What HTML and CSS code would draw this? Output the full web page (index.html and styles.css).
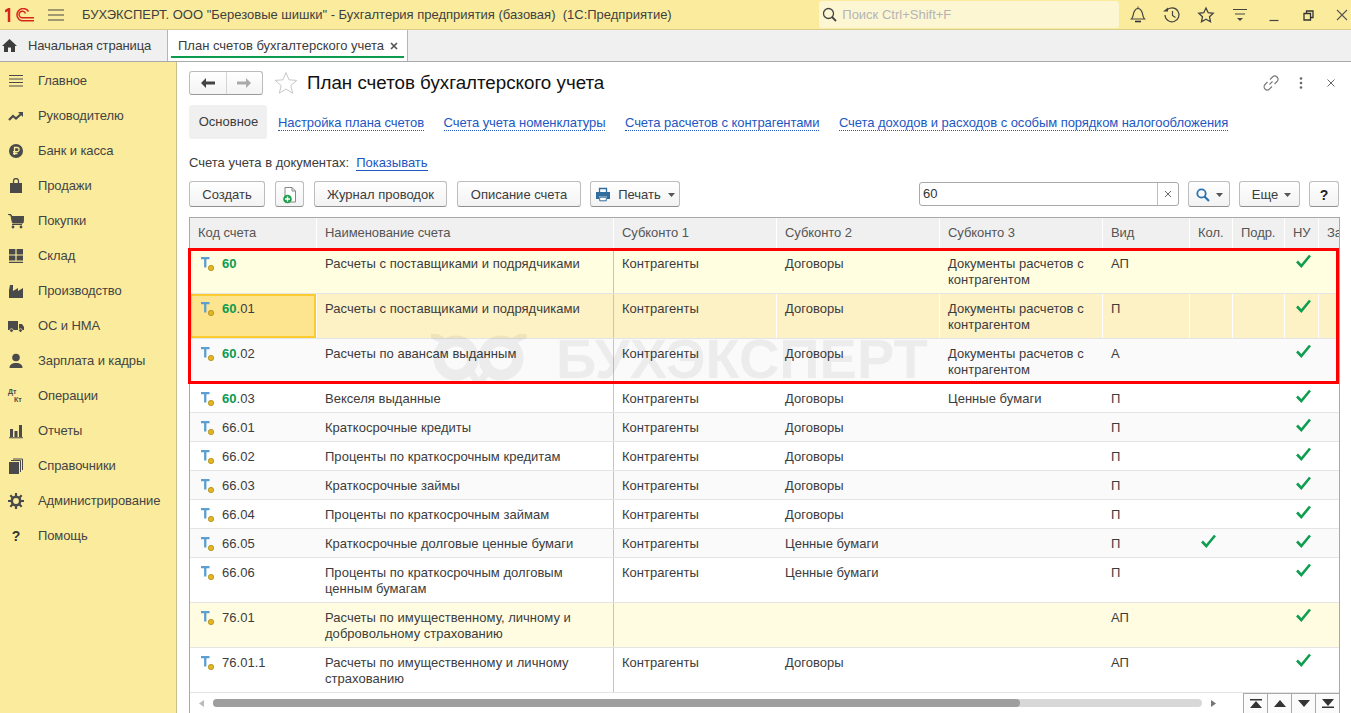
FILE: index.html
```html
<!DOCTYPE html>
<html lang="ru">
<head>
<meta charset="utf-8">
<title>План счетов бухгалтерского учета</title>
<link rel="stylesheet" href="styles.css">
</head>
<body>
<svg class="defs" width="0" height="0" aria-hidden="true">
  <symbol id="acct" viewBox="0 0 16 16"><path d="M1 1h8.500v2.300H6.400V11.500H4.100V3.300H1z" fill="#5b9fd0"/><circle cx="11" cy="12" r="2.700" fill="#e2b521" stroke="#a98a1c" stroke-width=".7"/></symbol>
  <symbol id="check" viewBox="0 0 16 14"><path d="M1 7.500l4.300 4.500L14 1.500" fill="none" stroke="#0f9d50" stroke-width="2.600"/></symbol>
  <symbol id="caret" viewBox="0 0 7 4"><path d="M0 0h7L3.500 4z" fill="#555"/></symbol>
</svg>
<div class="app">
  <header class="topbar">
    <svg class="logo" width="29" height="14" viewBox="0 0 29 14"><path d="M0 3.500L4 1v13" fill="none" stroke="#d9261c" stroke-width="2.500"/><path d="M23.500 3.500A6.200 6.200 0 1 0 16.500 12.700H29M20.500 5.500A3.300 3.300 0 1 0 16.500 9.700H29" fill="none" stroke="#d9261c" stroke-width="1.500"/></svg>
    <svg class="burger" width="16" height="12" viewBox="0 0 16 12"><path d="M0 1h16M0 6h16M0 11h16" stroke="#444" stroke-width="1.200"/></svg>
    <div class="apptitle">БУХЭКСПЕРТ. ООО "Березовые шишки" - Бухгалтерия предприятия (базовая)&nbsp; (1С:Предприятие)</div>
    <div class="globalsearch">
      <svg width="15" height="15" viewBox="0 0 15 15"><circle cx="6.500" cy="6.500" r="5" fill="none" stroke="#444" stroke-width="1.300"/><path d="M10 10l4 4" stroke="#444" stroke-width="1.800"/></svg>
      <span>Поиск Ctrl+Shift+F</span>
    </div>
    <div class="topicons">
      <svg width="18" height="18" viewBox="0 0 18 18"><path d="M2.500 13c2-2 1.500-4.500 2.500-7C6 3.500 7.800 2.500 9 2.500s3 1 4 3.500c1 2.500.5 5 2.500 7z" fill="none" stroke="#444" stroke-width="1.200"/><path d="M6 15.500h6" stroke="#333" stroke-width="1.600"/><path d="M9 .5v2" stroke="#444"/></svg>
      <svg width="18" height="18" viewBox="0 0 18 18"><path d="M3.500 4.500A7 7 0 1 1 2 9" fill="none" stroke="#444" stroke-width="1.200"/><path d="M0 5.500h5V1.500z" fill="#444"/><path d="M9.500 5v4.500l3 2" fill="none" stroke="#444" stroke-width="1.200"/></svg>
      <svg width="18" height="18" viewBox="0 0 18 18"><path d="M9 2l2.200 4.700 5 .6-3.700 3.400 1 5L9 13.300l-4.500 2.400 1-5L1.800 7.300l5-.6z" fill="none" stroke="#444" stroke-width="1.300"/></svg>
      <svg width="18" height="18" viewBox="0 0 18 18"><path d="M2 3.500h14M4 8h10" stroke="#444" stroke-width="1.200"/><path d="M6 12h6l-3 3z" fill="#444"/></svg>
      <svg width="18" height="18" viewBox="0 0 18 18"><path d="M4.500 14.500h9" stroke="#444" stroke-width="1.200"/></svg>
      <svg width="18" height="18" viewBox="0 0 18 18"><path d="M5 7.500h6.500V14H5zM7.500 7.500V5H14v6.500h-2.500" fill="none" stroke="#333" stroke-width="1.300"/></svg>
      <svg width="18" height="18" viewBox="0 0 18 18"><path d="M4 4l10 10M14 4L4 14" stroke="#555" stroke-width="1.100"/></svg>
    </div>
  </header>

  <nav class="tabbar">
    <div class="tab tab-home">
      <svg width="15" height="13" viewBox="0 0 15 13"><path d="M7.500 0L15 7h-2v6H9V8.500H6V13H2V7H0z" fill="#3d3d3d"/></svg>
      <span>Начальная страница</span>
    </div>
    <div class="tab tab-active">
      <span>План счетов бухгалтерского учета</span>
      <svg width="8" height="8" viewBox="0 0 8 8"><path d="M1 1l6 6M7 1L1 7" stroke="#555" stroke-width="1.700"/></svg>
    </div>
  </nav>

  <div class="main">
    <aside class="sidebar">
      <div class="sideitem"><svg width="16" height="16" viewBox="0 0 16 16"><path d="M1 2.500h14M1 6h14M1 9.500h14M1 13h14" stroke="#4a4a4a"/></svg><span>Главное</span></div>
      <div class="sideitem"><svg width="16" height="16" viewBox="0 0 16 16"><path d="M1 12l4-4 3 2.500L13 6" fill="none" stroke="#4a4a4a" stroke-width="2.200"/><path d="M10 4h5v5z" fill="#4a4a4a"/></svg><span>Руководителю</span></div>
      <div class="sideitem"><svg width="16" height="16" viewBox="0 0 16 16"><circle cx="8" cy="8" r="7" fill="#4a4a4a"/><path d="M6.500 12V4.500H9a2 2 0 0 1 0 4.200H5M5 10.500h4.500" fill="none" stroke="#fbec9d" stroke-width="1.300"/></svg><span>Банк и касса</span></div>
      <div class="sideitem"><svg width="16" height="16" viewBox="0 0 16 16"><path d="M2 5h12v10H2z" fill="#4a4a4a"/><path d="M5.500 7V3a2.500 2.500 0 0 1 5 0v4" fill="none" stroke="#4a4a4a" stroke-width="1.300"/></svg><span>Продажи</span></div>
      <div class="sideitem"><svg width="16" height="16" viewBox="0 0 16 16"><path d="M0 1.500h3l1 2h12l-1 6.500H4.500L3 3" fill="#4a4a4a" stroke="#4a4a4a"/><path d="M4 11.500h10" stroke="#4a4a4a"/><circle cx="5" cy="14" r="1.400" fill="#4a4a4a"/><circle cx="13" cy="14" r="1.400" fill="#4a4a4a"/></svg><span>Покупки</span></div>
      <div class="sideitem"><svg width="16" height="16" viewBox="0 0 16 16"><path d="M1 1h6.400v5.500H1zM8.600 1H15v5.500H8.600zM1 7.600h6.400v4.900H1zM8.600 7.600H15v4.900H8.600zM1 13.800h14V15H1z" fill="#4a4a4a"/></svg><span>Склад</span></div>
      <div class="sideitem"><svg width="16" height="16" viewBox="0 0 16 16"><path d="M1 15V7l1-5h3v6l5-3v3l5-3v10z" fill="#4a4a4a"/></svg><span>Производство</span></div>
      <div class="sideitem"><svg width="16" height="16" viewBox="0 0 16 16"><path d="M0 3h10v9H0zM11 6h3l2 3v3h-5z" fill="#4a4a4a"/><circle cx="3.500" cy="12.500" r="1.800" fill="#4a4a4a" stroke="#fbec9d" stroke-width=".7"/><circle cx="12.500" cy="12.500" r="1.800" fill="#4a4a4a" stroke="#fbec9d" stroke-width=".7"/></svg><span>ОС и НМА</span></div>
      <div class="sideitem"><svg width="16" height="16" viewBox="0 0 16 16"><circle cx="8" cy="4.500" r="3.800" fill="#4a4a4a"/><path d="M1.500 15c0-3.500 2.500-5 6.500-5s6.500 1.500 6.500 5z" fill="#4a4a4a"/></svg><span>Зарплата и кадры</span></div>
      <div class="sideitem"><span class="dtkt"><b>Дт</b><b>Кт</b></span><span>Операции</span></div>
      <div class="sideitem"><svg width="16" height="16" viewBox="0 0 16 16"><path d="M2 6h3v8H2zM6.500 8h3v6h-3zM11 2h3v12h-3zM1 14.300h14v1H1z" fill="#4a4a4a"/></svg><span>Отчеты</span></div>
      <div class="sideitem"><svg width="16" height="16" viewBox="0 0 16 16"><path d="M1 4h10v12H1z" fill="#4a4a4a"/><path d="M3 2.500h9.500V14M5 1h9.500v11" fill="none" stroke="#4a4a4a"/></svg><span>Справочники</span></div>
      <div class="sideitem"><svg width="16" height="16" viewBox="0 0 16 16"><circle cx="8" cy="8" r="4.200" fill="none" stroke="#4a4a4a" stroke-width="2.600"/><path d="M8 0v3M8 13v3M0 8h3M13 8h3M2.300 2.300l2.200 2.200M11.500 11.500l2.200 2.200M13.700 2.300l-2.200 2.200M4.500 11.500l-2.200 2.200" stroke="#4a4a4a" stroke-width="2.200"/></svg><span>Администрирование</span></div>
      <div class="sideitem"><span class="helpmark">?</span><span>Помощь</span></div>
    </aside>

    <section class="content">
      <div class="formhead">
        <div class="navbtns">
          <button class="navbtn"><svg width="14" height="10" viewBox="0 0 14 10"><path d="M5 0v3.500h9v3H5V10L0 5z" fill="#444"/></svg></button>
          <button class="navbtn"><svg width="14" height="10" viewBox="0 0 14 10"><path d="M9 0v3.500H0v3h9V10l5-5z" fill="#aaa"/></svg></button>
        </div>
        <svg class="favstar" width="24" height="24" viewBox="0 0 24 24"><path d="M12 1.500l3 7.300 7.800.6-6 5.100 1.900 7.700L12 18l-6.700 4.200 1.900-7.700-6-5.100 7.800-.6z" fill="none" stroke="#c8c8c8"/></svg>
        <h1>План счетов бухгалтерского учета</h1>
        <div class="headicons">
          <svg width="16" height="16" viewBox="0 0 16 16"><path d="M6.500 9.500l3-3M7 4.500L9.500 2a3 3 0 0 1 4.500 4.500L11.500 9M9 11.500L6.500 14A3 3 0 0 1 2 9.500L4.500 7" fill="none" stroke="#777" stroke-width="1.100"/></svg>
          <svg width="16" height="16" viewBox="0 0 16 16"><circle cx="8" cy="3.500" r="1.300" fill="#666"/><circle cx="8" cy="8" r="1.300" fill="#666"/><circle cx="8" cy="12.500" r="1.300" fill="#666"/></svg>
          <svg width="16" height="16" viewBox="0 0 16 16"><path d="M4.500 4.500l7 7M11.500 4.500l-7 7" stroke="#666"/></svg>
        </div>
      </div>

      <div class="pagelinks">
        <span class="pagetab">Основное</span>
        <a class="pagelink">Настройка плана счетов</a>
        <a class="pagelink">Счета учета номенклатуры</a>
        <a class="pagelink">Счета расчетов с контрагентами</a>
        <a class="pagelink">Счета доходов и расходов с особым порядком налогообложения</a>
      </div>

      <div class="infoline"><span>Счета учета в документах:</span><a class="solidlink">Показывать</a></div>

      <div class="toolbar">
        <button class="btn w-create">Создать</button>
        <button class="btn w-icon"><svg width="18" height="18" viewBox="0 0 18 18"><path d="M4 1.500h7l3.500 3.500v11H4z" fill="#fff" stroke="#888"/><path d="M11 1.500V5h3.500" fill="none" stroke="#888"/><circle cx="6.500" cy="13" r="4.300" fill="#1f9e4b"/><path d="M4 13h5M6.500 10.500v5" stroke="#fff" stroke-width="1.400"/></svg></button>
        <button class="btn w-journal">Журнал проводок</button>
        <button class="btn w-desc">Описание счета</button>
        <button class="btn w-print"><svg width="16" height="15" viewBox="0 0 16 15"><path d="M4.500 5V1.500h7V5" fill="none" stroke="#2f6d9e" stroke-width="1.300"/><path d="M1 5h14v7h-3V9.500H4V12H1z" fill="#2f6d9e"/><path d="M4.700 10.200h6.600v3.600H4.700z" fill="#fff" stroke="#2f6d9e"/></svg><span>Печать</span><svg class="caret" width="7" height="4"><use href="#caret"/></svg></button>
        <div class="searchfield"><span class="searchvalue">60</span><span class="searchclear"><svg width="8" height="8" viewBox="0 0 8 8"><path d="M1 1l6 6M7 1L1 7" stroke="#666"/></svg></span></div>
        <button class="btn w-find"><svg width="14" height="14" viewBox="0 0 14 14"><circle cx="5.500" cy="5.500" r="4.200" fill="none" stroke="#2b74b0" stroke-width="1.800"/><path d="M8.500 8.500L13 13" stroke="#2b74b0" stroke-width="2.200"/></svg><svg class="caret" width="7" height="4"><use href="#caret"/></svg></button>
        <button class="btn w-more"><span>Еще</span><svg class="caret" width="7" height="4"><use href="#caret"/></svg></button>
        <button class="btn w-help"><b>?</b></button>
      </div>

      <div class="grid">
        <div class="gridrow gridhead">
          <div>Код счета</div><div>Наименование счета</div><div>Субконто 1</div><div>Субконто 2</div><div>Субконто 3</div><div>Вид</div><div>Кол.</div><div>Подр.</div><div>НУ</div><div>За</div>
        </div>

        <div class="gridrow tall r-yellow">
          <div class="code"><svg class="acct"><use href="#acct"/></svg><span><b>60</b></span></div><div>Расчеты с поставщиками и подрядчиками</div><div>Контрагенты</div><div>Договоры</div><div>Документы расчетов с контрагентом</div><div>АП</div><div></div><div></div><div class="mark"><svg class="check"><use href="#check"/></svg></div><div></div>
        </div>
        <div class="gridrow tall r-selected">
          <div class="code current"><svg class="acct"><use href="#acct"/></svg><span><b>60</b>.01</span></div><div>Расчеты с поставщиками и подрядчиками</div><div>Контрагенты</div><div>Договоры</div><div>Документы расчетов с контрагентом</div><div>П</div><div></div><div></div><div class="mark"><svg class="check"><use href="#check"/></svg></div><div></div>
        </div>
        <div class="gridrow tall r-alt">
          <div class="code"><svg class="acct"><use href="#acct"/></svg><span><b>60</b>.02</span></div><div>Расчеты по авансам выданным</div><div>Контрагенты</div><div>Договоры</div><div>Документы расчетов с контрагентом</div><div>А</div><div></div><div></div><div class="mark"><svg class="check"><use href="#check"/></svg></div><div></div>
        </div>
        <div class="gridrow">
          <div class="code"><svg class="acct"><use href="#acct"/></svg><span><b>60</b>.03</span></div><div>Векселя выданные</div><div>Контрагенты</div><div>Договоры</div><div>Ценные бумаги</div><div>П</div><div></div><div></div><div class="mark"><svg class="check"><use href="#check"/></svg></div><div></div>
        </div>
        <div class="gridrow r-alt">
          <div class="code"><svg class="acct"><use href="#acct"/></svg><span>66.01</span></div><div>Краткосрочные кредиты</div><div>Контрагенты</div><div>Договоры</div><div></div><div>П</div><div></div><div></div><div class="mark"><svg class="check"><use href="#check"/></svg></div><div></div>
        </div>
        <div class="gridrow">
          <div class="code"><svg class="acct"><use href="#acct"/></svg><span>66.02</span></div><div>Проценты по краткосрочным кредитам</div><div>Контрагенты</div><div>Договоры</div><div></div><div>П</div><div></div><div></div><div class="mark"><svg class="check"><use href="#check"/></svg></div><div></div>
        </div>
        <div class="gridrow r-alt">
          <div class="code"><svg class="acct"><use href="#acct"/></svg><span>66.03</span></div><div>Краткосрочные займы</div><div>Контрагенты</div><div>Договоры</div><div></div><div>П</div><div></div><div></div><div class="mark"><svg class="check"><use href="#check"/></svg></div><div></div>
        </div>
        <div class="gridrow">
          <div class="code"><svg class="acct"><use href="#acct"/></svg><span>66.04</span></div><div>Проценты по краткосрочным займам</div><div>Контрагенты</div><div>Договоры</div><div></div><div>П</div><div></div><div></div><div class="mark"><svg class="check"><use href="#check"/></svg></div><div></div>
        </div>
        <div class="gridrow r-alt">
          <div class="code"><svg class="acct"><use href="#acct"/></svg><span>66.05</span></div><div>Краткосрочные долговые ценные бумаги</div><div>Контрагенты</div><div>Ценные бумаги</div><div></div><div>П</div><div class="mark"><svg class="check"><use href="#check"/></svg></div><div></div><div class="mark"><svg class="check"><use href="#check"/></svg></div><div></div>
        </div>
        <div class="gridrow tall">
          <div class="code"><svg class="acct"><use href="#acct"/></svg><span>66.06</span></div><div>Проценты по краткосрочным долговым ценным бумагам</div><div>Контрагенты</div><div>Ценные бумаги</div><div></div><div>П</div><div></div><div></div><div class="mark"><svg class="check"><use href="#check"/></svg></div><div></div>
        </div>
        <div class="gridrow tall r-pale">
          <div class="code"><svg class="acct"><use href="#acct"/></svg><span>76.01</span></div><div>Расчеты по имущественному, личному и добровольному страхованию</div><div></div><div></div><div></div><div>АП</div><div></div><div></div><div class="mark"><svg class="check"><use href="#check"/></svg></div><div></div>
        </div>
        <div class="gridrow tall">
          <div class="code"><svg class="acct"><use href="#acct"/></svg><span>76.01.1</span></div><div>Расчеты по имущественному и личному страхованию</div><div>Контрагенты</div><div>Договоры</div><div></div><div>АП</div><div></div><div></div><div class="mark"><svg class="check"><use href="#check"/></svg></div><div></div>
        </div>

        <div class="gridfoot">
          <div class="hscroll">
            <svg width="5" height="7" viewBox="0 0 5 7"><path d="M5 0v7L0 3.500z" fill="#bbb"/></svg>
            <div class="track"><div class="thumb"></div></div>
            <svg width="5" height="7" viewBox="0 0 5 7"><path d="M0 0v7l5-3.500z" fill="#777"/></svg>
          </div>
          <div class="pager">
            <button><svg width="12" height="9" viewBox="0 0 12 9"><path d="M0 0h12v1.500H0zM6 2l6 7H0z" fill="#333"/></svg></button>
            <button><svg width="12" height="7" viewBox="0 0 12 7"><path d="M6 0l6 7H0z" fill="#333"/></svg></button>
            <button><svg width="12" height="7" viewBox="0 0 12 7"><path d="M6 7l6-7H0z" fill="#333"/></svg></button>
            <button><svg width="12" height="9" viewBox="0 0 12 9"><path d="M0 7.500h12V9H0zM6 7l6-7H0z" fill="#333"/></svg></button>
          </div>
        </div>

        <div class="watermark">
          <svg width="96" height="50" viewBox="0 0 96 50"><circle cx="25" cy="24" r="17" fill="none" stroke="#000" stroke-width="11"/><circle cx="70" cy="24" r="17" fill="none" stroke="#000" stroke-width="11"/><path d="M0 0l14 8M95 0L81 8M40 38l8 12 8-12" stroke="#000" stroke-width="7" fill="none"/></svg>
          <span>БУХЭКСПЕРТ</span>
        </div>
        <div class="redframe"></div>
      </div>
    </section>
  </div>
</div>
</body>
</html>
```
FILE: styles.css
```css
* { box-sizing: border-box; }
html, body { margin: 0; height: 100%; overflow: hidden; }
body { font: 13px/16px "Liberation Sans", Arial, sans-serif; color: #3c3c3c; background: #fff; }
.defs { position: absolute; }
svg { display: block; flex: none; }
button { font: inherit; color: inherit; }

.app { display: flex; flex-direction: column; height: 713px; width: 1351px; }

.topbar { height: 30px; flex: none; display: flex; align-items: center; background: #fbec9d; border-bottom: 1px solid #d8cd8f; }
.logo { margin-left: 5px; }
.burger { margin-left: 14px; }
.apptitle { margin-left: 18px; width: 738px; white-space: nowrap; color: #3f3f3f; }
.globalsearch { width: 300px; height: 27px; display: flex; align-items: center; gap: 5px; padding-left: 3px; background: #fdf6d3; border-radius: 3px; color: #b4b4b4; }
.topicons { display: flex; margin-left: 10px; gap: 16px; }

.tabbar { height: 32px; flex: none; display: flex; background: #f0f0f0; border-bottom: 1px solid #a9a9a9; }
.tab { display: flex; align-items: center; height: 31px; border-right: 1px solid #b5b5b5; }
.tab-home { width: 168px; gap: 11px; padding-left: 2px; letter-spacing: -.15px; }
.tab-active { width: 240px; padding-left: 10px; gap: 6px; background: #fff; position: relative; }
.tab-active::after { content: ""; position: absolute; left: 3px; right: 3px; bottom: 3px; height: 2px; background: #0c9c4e; }

.main { flex: 1; display: flex; min-height: 0; }
.sidebar { width: 177px; flex: none; background: #fbec9d; border-right: 1px solid #c9c08c; padding-top: 1px; }
.sideitem { height: 35px; display: flex; align-items: center; gap: 14px; padding-left: 8px; color: #444; letter-spacing: -.1px; }
.dtkt { width: 16px; height: 16px; display: flex; flex-direction: column; font-size: 7px; line-height: 8px; color: #4a4a4a; }
.dtkt b:last-child { margin-left: 6px; }
.helpmark { width: 16px; text-align: center; font-size: 14px; font-weight: bold; color: #333; }

.content { flex: 1; display: flex; flex-direction: column; padding: 9px 11px 0 12px; min-width: 0; }
.formhead { height: 24px; flex: none; display: flex; align-items: center; }
.navbtns { display: flex; width: 74px; height: 24px; border: 1px solid #bcbcbc; border-bottom-color: #9a9a9a; border-radius: 3px; background: linear-gradient(#fff, #f4f4f4); }
.navbtn { flex: 1; border: 0; background: none; padding: 0; display: flex; align-items: center; justify-content: center; }
.navbtn + .navbtn { border-left: 1px solid #d4d4d4; }
.favstar { margin-left: 11px; }
h1 { margin: 0 0 0 9px; font-size: 18.75px; font-weight: normal; color: #111; white-space: nowrap; flex: 1; line-height: 24px; }
.headicons { display: flex; gap: 14px; margin-right: 1px; }

.pagelinks { height: 34px; margin-top: 10px; flex: none; display: flex; align-items: center; gap: 19.500px; }
.pagetab { width: 78px; height: 34px; margin-right: -8.500px; background: #f0f0f0; border-radius: 3px; display: flex; align-items: center; justify-content: center; padding-left: 1px; }
.pagelink { color: #1c57c2; border-bottom: 1px dotted #1c57c2; line-height: 14px; padding-top: 2px; letter-spacing: -.06px; }

.infoline { margin-top: 15px; height: 16px; flex: none; display: flex; gap: 7px; padding-top: 1px; }
.solidlink { color: #1c57c2; border-bottom: 1px solid #1c57c2; line-height: 15px; height: 16px; }

.toolbar { margin-top: 11px; height: 26px; flex: none; display: flex; align-items: flex-start; }
.btn { height: 26px; border: 1px solid #bdbdbd; border-bottom-color: #8f8f8f; border-radius: 3px; background: linear-gradient(#fff, #f3f3f3); padding: 1px 0 0; display: flex; align-items: center; justify-content: center; gap: 6px; color: #3c3c3c; }
.w-create { width: 76px; margin-right: 10px; }
.w-icon { width: 29px; margin-right: 10px; }
.w-journal { width: 133px; margin-right: 10px; }
.w-desc { width: 124px; margin-right: 9px; }
.w-print { width: 90px; gap: 7px; }
.searchfield { width: 260px; height: 24px; margin: 1px 9px 0 239px; border: 1px solid #a9a9a9; border-radius: 3px; display: flex; background: #fff; }
.searchvalue { flex: 1; padding-left: 3px; line-height: 22px; color: #333; }
.searchclear { width: 21px; border-left: 1px solid #bdbdbd; display: flex; align-items: center; justify-content: center; }
.w-find { width: 42px; margin-right: 9px; }
.w-more { width: 61px; margin-right: 9px; padding-left: 4px; }
.w-help { width: 30px; flex: none; font-size: 14px; color: #222; }

.grid { flex: 1; margin-top: 10px; position: relative; border: 1px solid #a9a9a9; border-bottom: 0; min-height: 0; display: flex; flex-direction: column; width: 1151px; }
.gridrow { height: 29px; flex: none; display: grid; grid-template-columns: 127px 297px 163px 163px 163px 87px 43px 52px 34px 20px; border-bottom: 1px solid #e4e4e4; letter-spacing: .03px; }
.gridrow > div { padding: 7px 8px 0; border-right: 1px solid transparent; min-width: 0; }
.gridrow > div:nth-child(2) { border-right-color: #c4c4c4; }
.gridrow.tall { height: 45px; }
.gridrow.gridhead { height: 31px; border-bottom: 1px solid #e4e4e4; background: #fff; letter-spacing: -.07px; }
.gridrow.gridhead > div { padding-top: 7px; background: #f0f0f0; border-right: 1px solid #fff; white-space: nowrap; overflow: hidden; color: #555; }
.gridhead > div:last-child { border-right: 0; }
.r-yellow { background: #fffee0; }
.r-selected { background: #fdf1c6; }
.r-selected > div { border-right-color: #fff; }
.r-alt { background: #fafafa; }
.r-pale { background: #fffce1; }

.gridrow > .code { display: flex; gap: 6px; padding: 7px 8px 0 10px; }
.code b { color: #0b9b52; }
.acct { width: 16px; height: 16px; }
.current { background: #fde48f; box-shadow: inset 0 0 0 2px #fbcb2f; }
.gridrow > .mark { padding: 5px 0 0 11px; display: flex; }
.check { width: 16px; height: 14px; }

.gridfoot { flex: 1; display: flex; min-height: 0; }
.hscroll { flex: 1; display: flex; align-items: center; padding: 0 27px 0 9px; gap: 9px; }
.track { flex: 1; height: 8px; border-radius: 4px; background: #d8d8d8; }
.thumb { width: 807px; height: 8px; border-radius: 4px; background: #9e9e9e; }
.pager { display: flex; height: 100%; }
.pager button { width: 24px; border: 1px solid #a9a9a9; border-bottom: 0; border-right: 0; background: #fbfbfb; padding: 0; display: flex; align-items: center; justify-content: center; }

.watermark { position: absolute; left: 241px; top: 116px; display: flex; align-items: center; gap: 29px; opacity: .05; pointer-events: none; color: #000; }
.watermark span { font-size: 56px; line-height: 50px; font-weight: bold; white-space: nowrap; }

.redframe { position: absolute; left: -2px; top: 30px; width: 1151px; height: 136px; border: 3px solid #f00; pointer-events: none; }
```
